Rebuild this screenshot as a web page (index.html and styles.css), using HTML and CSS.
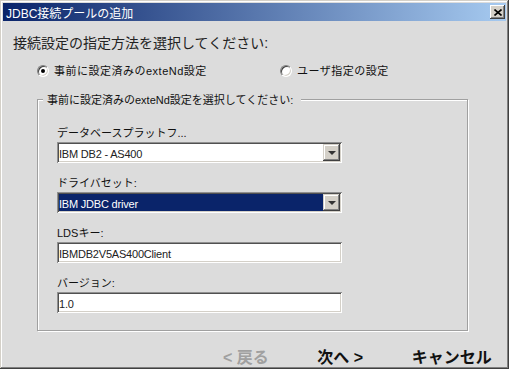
FILE: index.html
```html
<!DOCTYPE html>
<html lang="ja">
<head>
    <meta charset="UTF-8">
    <title>JDBC接続プールの追加</title>
    <link rel="stylesheet" href="styles.css">
</head>
<body>
    <div class="window">
        <div class="titlebar">
            <span class="title">JDBC接続プールの追加</span>
            <span class="close">
                <svg width="8" height="7" viewBox="0 0 8 7"><path d="M0.5 0.5L7.5 6.5M7.5 0.5L0.5 6.5" stroke="#000" stroke-width="1.6" fill="none"/></svg>
            </span>
        </div>

        <h1 class="heading">接続設定の指定方法を選択してください:</h1>

        <div class="choices">
            <label class="choice first"><span class="radio checked"></span>事前に設定済みのexteNd設定</label>
            <label class="choice"><span class="radio"></span>ユーザ指定の設定</label>
        </div>

        <div class="group">
            <span class="group-title">事前に設定済みのexteNd設定を選択してください:</span>

            <div class="field">
                <div class="field-label">データベースプラットフ...</div>
                <div class="box combo">
                    <span class="value">IBM DB2 - AS400</span>
                    <span class="arrow"></span>
                </div>
            </div>

            <div class="field">
                <div class="field-label">ドライバセット:</div>
                <div class="box combo selected">
                    <span class="value">IBM JDBC driver</span>
                    <span class="arrow"></span>
                </div>
            </div>

            <div class="field">
                <div class="field-label">LDSキー:</div>
                <div class="box"><span class="value">IBMDB2V5AS400Client</span></div>
            </div>

            <div class="field">
                <div class="field-label">バージョン:</div>
                <div class="box"><span class="value">1.0</span></div>
            </div>
        </div>

        <div class="buttons">
            <span class="btn disabled">&lt; 戻る</span>
            <span class="btn">次へ &gt;</span>
            <span class="btn">キャンセル</span>
        </div>
    </div>
</body>
</html>
```

FILE: styles.css
```css
* {
    margin: 0;
    padding: 0;
    box-sizing: border-box;
}

body {
    font-family: "Liberation Sans", "Noto Sans CJK JP", sans-serif;
    background: #dcdcdc;
    color: #111;
}

.window {
    width: 509px;
    height: 369px;
    padding: 3px;
    background: #dcdcdc;
    box-shadow: inset -1px -1px #404040, inset 1px 1px #d4d0c8,
                inset -2px -2px #808080, inset 2px 2px #fff;
}

.titlebar {
    height: 18px;
    display: flex;
    align-items: center;
    justify-content: space-between;
    padding: 0 1px 0 3px;
    background: linear-gradient(to right, #0a246a, #a6caf0);
    color: #fff;
    font-size: 12px;
}

.close {
    width: 15px;
    height: 14px;
    display: flex;
    align-items: center;
    justify-content: center;
    background: #d4d0c8;
    box-shadow: inset -1px -1px #404040, inset 1px 1px #fff,
                inset -2px -2px #808080;
}

.heading {
    font-size: 14px;
    font-weight: normal;
    line-height: 16px;
    margin: 14px 0 0 10px;
    color: #222;
}

.choices {
    display: flex;
    margin: 13px 0 0 34px;
    font-size: 11px;
    letter-spacing: 0.5px;
    line-height: 14px;
}

.choice {
    display: flex;
    align-items: center;
    gap: 5px;
}

.choice.first {
    width: 243px;
}

.radio {
    width: 12px;
    height: 12px;
    border-radius: 50%;
    background: #fff;
    border: 1px solid;
    border-color: #808080 #fff #fff #808080;
    box-shadow: inset 1px 1px #404040, inset -1px -1px #d4d0c8;
    display: flex;
    align-items: center;
    justify-content: center;
}

.radio.checked::after {
    content: "";
    width: 4px;
    height: 4px;
    border-radius: 50%;
    background: #000;
}

.group {
    position: relative;
    width: 431px;
    margin: 21px 0 0 34px;
    padding: 26px 0 17px 19px;
    border: 1px solid #a0a0a0;
    box-shadow: inset 1px 1px #fff, 1px 1px #fff;
}

.group-title {
    position: absolute;
    top: -7px;
    left: 5px;
    padding: 0 8px 0 4px;
    background: #dcdcdc;
    font-size: 11px;
    line-height: 14px;
}

.field + .field {
    margin-top: 13px;
}

.field-label {
    font-size: 11px;
    line-height: 14px;
    margin-bottom: 2px;
}

.box {
    width: 285px;
    height: 21px;
    padding: 2px;
    display: flex;
    background: #fff;
    color: #222;
    font-size: 11px;
    letter-spacing: -0.2px;
    box-shadow: inset 1px 1px #909090, inset -1px -1px #fff,
                inset 2px 2px #505050, inset -2px -2px #d4d0c8;
}

.value {
    flex: 1;
    display: flex;
    align-items: center;
    padding-top: 2px;
}

.combo.selected .value {
    background: #0a246a;
    color: #fff;
}

.arrow {
    width: 17px;
    display: flex;
    align-items: center;
    justify-content: center;
    background: #d4d0c8;
    box-shadow: inset -1px -1px #404040, inset 1px 1px #d4d0c8,
                inset -2px -2px #808080, inset 2px 2px #fff;
}

.arrow::after {
    content: "";
    border-left: 4px solid transparent;
    border-right: 4px solid transparent;
    border-top: 4px solid #333;
}

.buttons {
    display: flex;
    margin: 18px 0 0 220px;
    font-size: 16px;
    font-weight: bold;
    line-height: 18px;
}

.btn {
    width: 95px;
}

.btn.disabled {
    color: #a0a0a0;
}
```
